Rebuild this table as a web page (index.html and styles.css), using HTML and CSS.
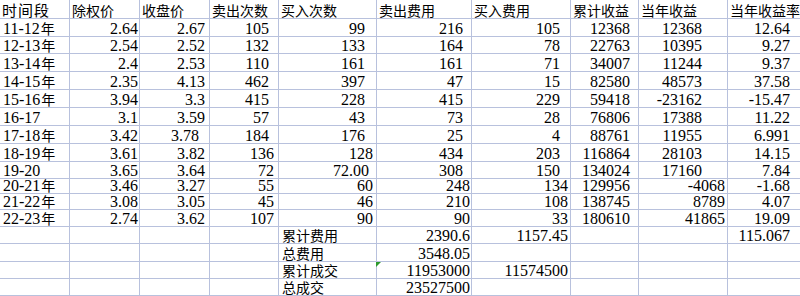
FILE: index.html
```html
<!DOCTYPE html>
<html lang="zh-CN">
<head>
<meta charset="utf-8">
<title>收益统计</title>
<link rel="stylesheet" href="styles.css">
</head>
<body>
<div class="sheet">
  <div class="a hd">时间段</div><div class="hd">除权价</div><div class="hd">收盘价</div><div class="hd">卖出次数</div><div class="hd">买入次数</div><div class="hd">卖出费用</div><div class="hd">买入费用</div><div class="hd">累计收益</div><div class="hd">当年收益</div><div class="hd">当年收益率</div>

  <div class="a"><span>11-12<span class="cj">年</span></span></div><div class="n b">2.64</div><div class="n c">2.67</div><div class="n d">105</div><div class="n e">99</div><div class="n f">216</div><div class="n g">105</div><div class="n h">12368</div><div class="n i">12368</div><div class="n j">12.64</div>
  <div class="a"><span>12-13<span class="cj">年</span></span></div><div class="n b">2.54</div><div class="n c">2.52</div><div class="n d">132</div><div class="n e">133</div><div class="n f">164</div><div class="n g">78</div><div class="n h">22763</div><div class="n i">10395</div><div class="n j">9.27</div>
  <div class="a"><span>13-14<span class="cj">年</span></span></div><div class="n b">2.4</div><div class="n c">2.53</div><div class="n d">110</div><div class="n e">161</div><div class="n f">161</div><div class="n g">71</div><div class="n h">34007</div><div class="n i">11244</div><div class="n j">9.37</div>
  <div class="a"><span>14-15<span class="cj">年</span></span></div><div class="n b">2.35</div><div class="n c">4.13</div><div class="n d">462</div><div class="n e">397</div><div class="n f">47</div><div class="n g">15</div><div class="n h">82580</div><div class="n i">48573</div><div class="n j">37.58</div>
  <div class="a"><span>15-16<span class="cj">年</span></span></div><div class="n b">3.94</div><div class="n c">3.3</div><div class="n d">415</div><div class="n e">228</div><div class="n f">415</div><div class="n g">229</div><div class="n h">59418</div><div class="n i">-23162</div><div class="n j">-15.47</div>
  <div class="a"><span>16-17</span></div><div class="n b">3.1</div><div class="n c">3.59</div><div class="n d">57</div><div class="n e">43</div><div class="n f">73</div><div class="n g">28</div><div class="n h">76806</div><div class="n i">17388</div><div class="n j">11.22</div>
  <div class="a"><span>17-18<span class="cj">年</span></span></div><div class="n b">3.42</div><div class="n c c2">3.78</div><div class="n d">184</div><div class="n e">176</div><div class="n f">25</div><div class="n g">4</div><div class="n h">88761</div><div class="n i">11955</div><div class="n j">6.991</div>
  <div class="a"><span>18-19<span class="cj">年</span></span></div><div class="n b">3.61</div><div class="n c">3.82</div><div class="n d d2">136</div><div class="n e e2">128</div><div class="n f">434</div><div class="n g">203</div><div class="n h">116864</div><div class="n i">28103</div><div class="n j">14.15</div>
  <div class="a"><span>19-20</span></div><div class="n b">3.65</div><div class="n c">3.64</div><div class="n d d2">72</div><div class="n e e3">72.00</div><div class="n f">308</div><div class="n g">150</div><div class="n h">134024</div><div class="n i">17160</div><div class="n j">7.84</div>
  <div class="a"><span>20-21<span class="cj">年</span></span></div><div class="n b">3.46</div><div class="n c">3.27</div><div class="n d d2">55</div><div class="n e e2">60</div><div class="n f f2">248</div><div class="n g g2">134</div><div class="n h">129956</div><div class="n i i2">-4068</div><div class="n j">-1.68</div>
  <div class="a"><span>21-22<span class="cj">年</span></span></div><div class="n b">3.08</div><div class="n c">3.05</div><div class="n d d2">45</div><div class="n e e2">46</div><div class="n f f2">210</div><div class="n g g2">108</div><div class="n h">138745</div><div class="n i i2">8789</div><div class="n j">4.07</div>
  <div class="a"><span>22-23<span class="cj">年</span></span></div><div class="n b">2.74</div><div class="n c">3.62</div><div class="n d d2">107</div><div class="n e e2">90</div><div class="n f f2">90</div><div class="n g g2">33</div><div class="n h">180610</div><div class="n i i2">41865</div><div class="n j">19.09</div>

  <div></div><div></div><div></div><div></div><div class="lb">累计费用</div><div class="n f f2">2390.6</div><div class="n g g2">1157.45</div><div></div><div></div><div class="n j">115.067</div>
  <div></div><div></div><div></div><div></div><div class="lb">总费用</div><div class="n f f2">3548.05</div><div></div><div></div><div></div><div></div>
  <div></div><div></div><div></div><div></div><div class="lb">累计成交</div><div class="n f f2 flag">11953000</div><div class="n g g2">11574500</div><div></div><div></div><div></div>
  <div></div><div></div><div></div><div></div><div class="lb">总成交</div><div class="n f f2">23527500</div><div></div><div></div><div></div><div></div>
</div>
</body>
</html>
```

FILE: styles.css
```css
html, body {
  margin: 0;
  padding: 0;
  background: #ffffff;
  overflow: hidden;
}

.sheet {
  display: grid;
  grid-template-columns: 70px 70px 70px 69px 98px 95px 99px 68px 89px 72px;
  grid-template-rows: 19px 18px 17px 18px 18px 18px 18px 18px 18px 17px 15px 16px 17px 17px 18px 17px 17px;
  width: 800px;
  font-family: "Liberation Serif", "Noto Sans CJK SC", serif;
  font-size: 16px;
  color: #000;
}

.sheet > div {
  box-sizing: border-box;
  border-right: 1px solid #b8c1dd;
  border-bottom: 1px solid #b8c1dd;
  display: flex;
  align-items: flex-end;
  justify-content: flex-start;
  padding: 0 2px 0 3px;
  line-height: 14px;
  white-space: nowrap;
  position: relative;
}

.sheet > div:nth-child(10n) {
  border-right: none;
}

.sheet > .hd {
  font-family: "Noto Sans CJK SC", sans-serif;
  font-size: 14px;
  padding-left: 2px;
  padding-bottom: 1px;
}

.sheet > .a.hd {
  font-size: 15px;
  letter-spacing: 1px;
}

.cj {
  font-family: "Noto Sans CJK SC", sans-serif;
  font-size: 14px;
  line-height: 0;
  margin-left: 1px;
}

.sheet > .lb {
  font-family: "Noto Sans CJK SC", sans-serif;
  font-size: 14px;
  padding-left: 3px;
  padding-bottom: 1px;
}

.sheet > .n {
  justify-content: flex-end;
  padding-left: 0;
}

.sheet > .b { padding-right: 1px; }
.sheet > .c { padding-right: 4px; }
.sheet > .c2 { padding-right: 10px; }
.sheet > .d { padding-right: 9px; }
.sheet > .d2 { padding-right: 4px; }
.sheet > .e { padding-right: 11px; }
.sheet > .e2 { padding-right: 3px; }
.sheet > .e3 { padding-right: 7px; }
.sheet > .f { padding-right: 8px; }
.sheet > .f2 { padding-right: 1px; }
.sheet > .g { padding-right: 10px; }
.sheet > .g2 { padding-right: 2px; }
.sheet > .h { padding-right: 8px; }
.sheet > .i { padding-right: 25px; }
.sheet > .i2 { padding-right: 2px; }
.sheet > .j { padding-right: 10px; }

.flag::before {
  content: "";
  position: absolute;
  left: -1px;
  top: 0;
  width: 0;
  height: 0;
  border-top: 5px solid #2e9a2e;
  border-right: 5px solid transparent;
}
```
